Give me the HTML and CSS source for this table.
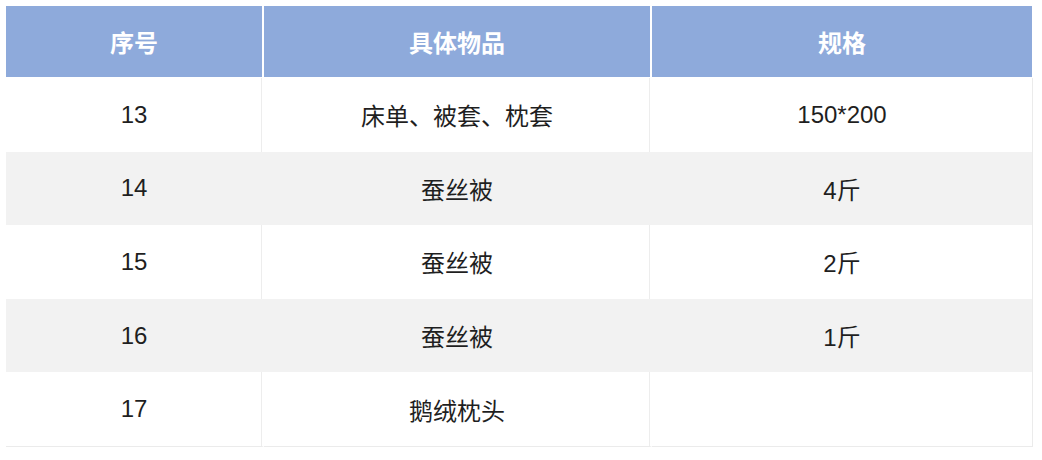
FILE: index.html
```html
<!DOCTYPE html>
<html lang="zh-CN">
<head>
<meta charset="utf-8">
<title>物品规格表</title>
<link rel="stylesheet" href="styles.css">
</head>
<body>
<table class="spec-table">
  <colgroup>
    <col class="col-no">
    <col class="col-item">
    <col class="col-size">
  </colgroup>
  <thead>
    <tr>
      <th>序号</th>
      <th>具体物品</th>
      <th>规格</th>
    </tr>
  </thead>
  <tbody>
    <tr><td>13</td><td>床单、被套、枕套</td><td>150*200</td></tr>
    <tr class="alt"><td>14</td><td>蚕丝被</td><td>4斤</td></tr>
    <tr><td>15</td><td>蚕丝被</td><td>2斤</td></tr>
    <tr class="alt"><td>16</td><td>蚕丝被</td><td>1斤</td></tr>
    <tr><td>17</td><td>鹅绒枕头</td><td></td></tr>
  </tbody>
</table>
</body>
</html>
```

FILE: styles.css
```css
html, body {
  margin: 0;
  padding: 0;
  background: #ffffff;
}

body {
  padding: 6px 0 0 6px;
  font-family: "Liberation Sans", "Noto Sans CJK SC", sans-serif;
  color: #1f1f1f;
}

.spec-table {
  border-collapse: separate;
  border-spacing: 0;
  width: 1027px;
  table-layout: fixed;
  font-size: 24px;
}

.col-no { width: 258px; }
.col-item { width: 388px; }
.col-size { width: 381px; }

.spec-table th {
  background: #8eaadb;
  color: #ffffff;
  font-weight: bold;
  height: 71px;
  padding: 0;
  border-right: 2px solid #ffffff;
  border-bottom: 1px solid #ffffff;
  text-align: center;
  vertical-align: middle;
}

.spec-table th:last-child {
  border-right: 1px solid #ffffff;
}

.spec-table td {
  height: 73.6px;
  padding: 0;
  text-align: center;
  vertical-align: middle;
  border-right: 2px solid #ffffff;
  background: #ffffff;
}

.spec-table td:first-child {
  box-shadow: inset -1px 0 0 #ededed;
}

.spec-table td:nth-child(2) {
  box-shadow: inset -1px 0 0 #ededed;
}

.spec-table td:last-child {
  border-right: 1px solid #ebebeb;
}

.spec-table tr.alt td {
  background: #f2f2f2;
  box-shadow: none;
  border-right-color: #f2f2f2;
}

.spec-table tr.alt td:last-child {
  border-right-color: #ebebeb;
}

.spec-table tbody tr:last-child td {
  border-bottom: 1px solid #ebebeb;
}
```
